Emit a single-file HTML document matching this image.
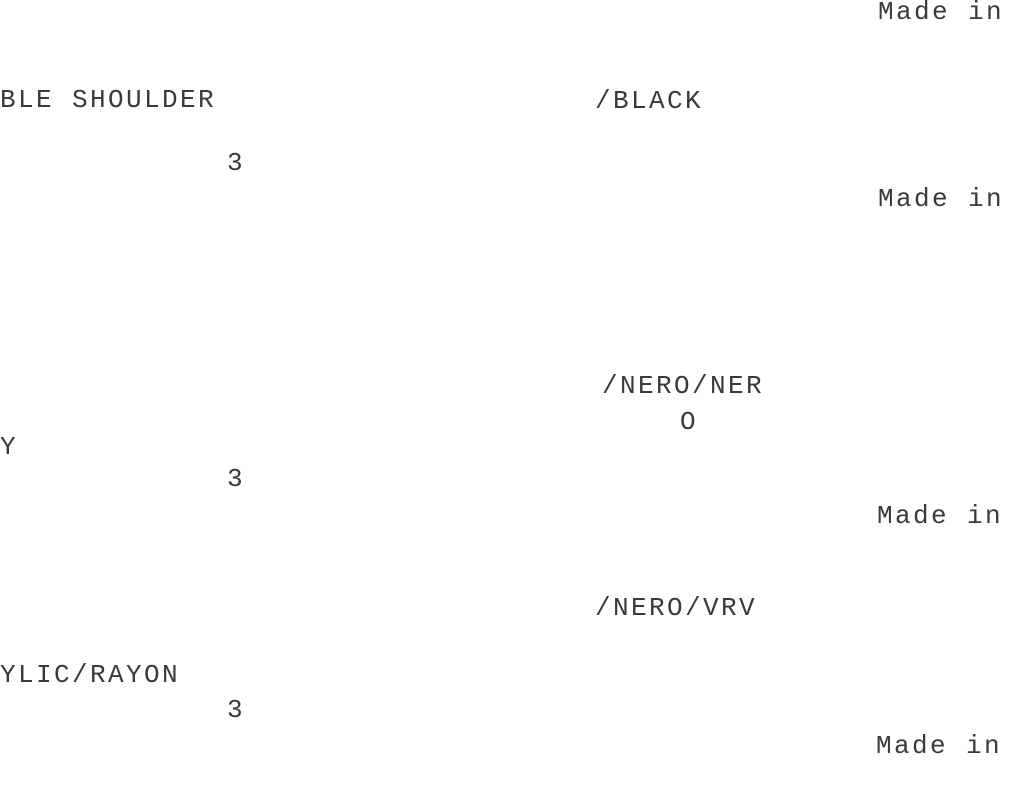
<!DOCTYPE html>
<html><head><style>
html,body{margin:0;padding:0;background:#fff;width:1009px;height:791px;overflow:hidden;position:relative}
span{position:absolute;font-family:"Liberation Mono",monospace;font-size:26px;letter-spacing:2.4px;line-height:26px;color:#3a3a3a;white-space:pre}
</style></head><body>
<span style="left:878px;top:-1px">Made in</span>
<span style="left:0px;top:87px">BLE SHOULDER</span>
<span style="left:595px;top:88px">/BLACK</span>
<span style="left:227px;top:150px">3</span>
<span style="left:878px;top:186px">Made in</span>
<span style="left:602px;top:373px">/NERO/NER</span>
<span style="left:680px;top:409px">O</span>
<span style="left:0px;top:434px">Y</span>
<span style="left:227px;top:466px">3</span>
<span style="left:877px;top:503px">Made in</span>
<span style="left:595px;top:595px">/NERO/VRV</span>
<span style="left:0px;top:662px">YLIC/RAYON</span>
<span style="left:227px;top:697px">3</span>
<span style="left:876px;top:733px">Made in</span>
</body></html>
